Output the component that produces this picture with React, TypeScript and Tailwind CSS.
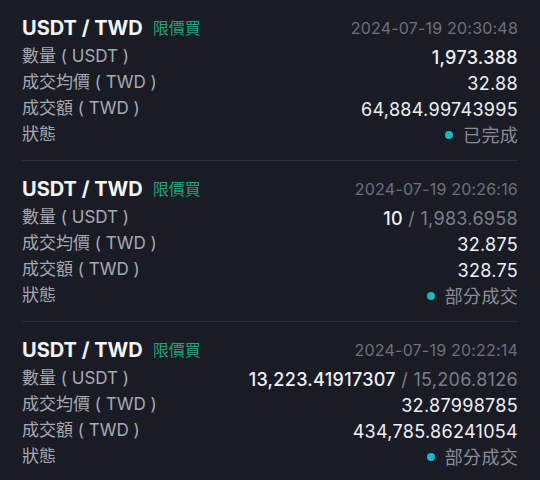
const FONT = "[font-family:Inter,'Noto_Sans_CJK_TC',sans-serif]";

type Order = {
  time: string;
  filled: string;
  total?: string;
  avg: string;
  amount: string;
  status: string;
};

const orders: Order[] = [
  { time: "2024-07-19 20:30:48", filled: "1,973.388", avg: "32.88", amount: "64,884.99743995", status: "已完成" },
  { time: "2024-07-19 20:26:16", filled: "10", total: "1,983.6958", avg: "32.875", amount: "328.75", status: "部分成交" },
  { time: "2024-07-19 20:22:14", filled: "13,223.41917307", total: "15,206.8126", avg: "32.87998785", amount: "434,785.86241054", status: "部分成交" },
];

function Row({ label, children }: { label: string; children: React.ReactNode }) {
  return (
    <div className="flex h-[26px] items-center justify-between">
      <span className="text-[17px] text-[#a8aab2]">{label}</span>
      <span className="text-[18px] tracking-[0.3px] text-[#eef0f3]">{children}</span>
    </div>
  );
}

function OrderCard({ o }: { o: Order }) {
  return (
    <div className="border-b border-[#2a2d37] pt-[14px] pb-[12px]">
      <div className="mb-[2px] flex h-[28px] items-center justify-between">
        <div className="flex items-center gap-[10px]">
          <span className="text-[20px] font-bold text-[#f4f5f7]">USDT / TWD</span>
          <span className="text-[16px] text-[#1fa57a]">限價買</span>
        </div>
        <span className="text-[16px] tracking-[0.2px] text-[#6e717b]">{o.time}</span>
      </div>
      <Row label="數量 ( USDT )">
        <span className="font-medium">{o.filled}</span>
        {o.total && <span className="text-[#7c7f88]"> / {o.total}</span>}
      </Row>
      <Row label="成交均價 ( TWD )">{o.avg}</Row>
      <Row label="成交額 ( TWD )">{o.amount}</Row>
      <Row label="狀態">
        <span className="flex items-center gap-[10px] text-[#8b8e96]">
          <span className="h-[8px] w-[8px] rounded-full bg-[#1fb6c1]" />
          {o.status}
        </span>
      </Row>
    </div>
  );
}

export default function App() {
  return (
    <div className={`h-[480px] w-[540px] overflow-hidden bg-[#1a1c25] px-[22px] ${FONT}`}>
      {orders.map((o) => (
        <OrderCard key={o.time} o={o} />
      ))}
    </div>
  );
}
